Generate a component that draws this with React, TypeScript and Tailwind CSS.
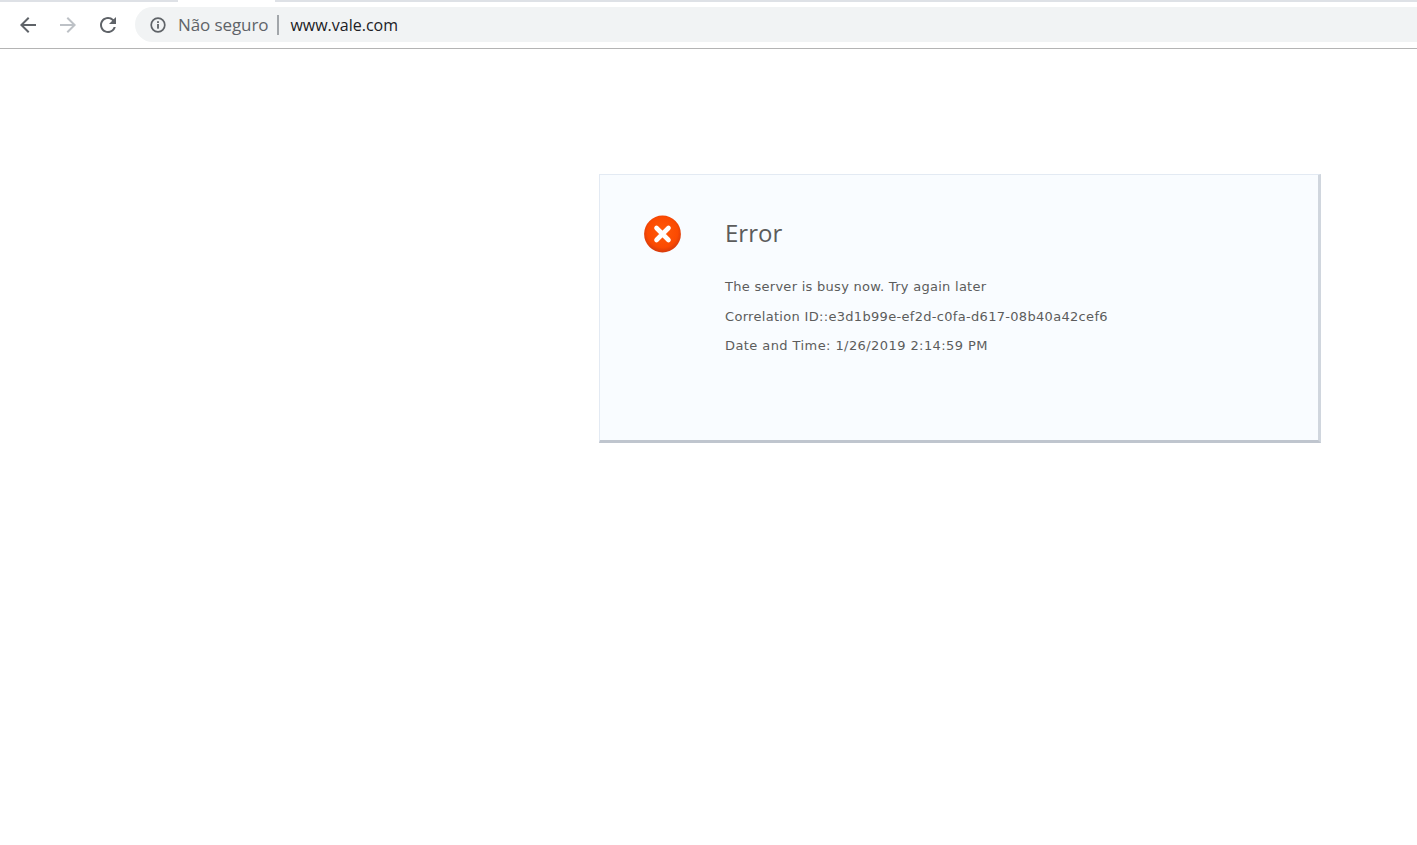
function NavIcon({ d, className }: { d: string; className: string }) {
  return (
    <svg width="24" height="24" viewBox="0 0 24 24" className={className} fill="currentColor">
      <path d={d} />
    </svg>
  );
}

function InfoIcon() {
  return (
    <svg width="16" height="16" viewBox="0 0 16 16" fill="none">
      <circle cx="8" cy="8" r="6.8" stroke="#5f6368" strokeWidth="1.7" />
      <rect x="7.1" y="7" width="1.8" height="4.7" fill="#5f6368" />
      <rect x="7.1" y="4.2" width="1.8" height="1.8" fill="#5f6368" />
    </svg>
  );
}

function ErrorIcon() {
  return (
    <svg width="38" height="38" viewBox="0 0 38 38">
      <defs>
        <radialGradient id="err" cx="50%" cy="45%" r="55%">
          <stop offset="0%" stopColor="#ff5a0a" />
          <stop offset="75%" stopColor="#fb4a02" />
          <stop offset="100%" stopColor="#d63a0c" />
        </radialGradient>
      </defs>
      <circle cx="18.5" cy="19" r="18.4" fill="url(#err)" />
      <path d="M12.5 13 L24.5 25 M24.5 13 L12.5 25" stroke="#fff" strokeWidth="4.6" strokeLinecap="round" />
    </svg>
  );
}

function Toolbar() {
  return (
    <div>
      <div className="flex h-[2px] bg-[#dee1e6]">
        <div className="ml-[178px] w-[97px] bg-white" />
      </div>
      <div className="flex h-[47px] items-center border-b border-[#b4b4b4] bg-white pb-[1px]">
        <div className="ml-[16px] flex items-center gap-[16px]">
          <NavIcon className="text-[#5f6368]" d="M20 11H7.83l5.59-5.59L12 4l-8 8 8 8 1.41-1.41L7.83 13H20v-2z" />
          <NavIcon className="text-[#bdc1c6]" d="M4 11h12.17l-5.59-5.59L12 4l8 8-8 8-1.41-1.41L16.17 13H4v-2z" />
          <NavIcon className="text-[#5f6368]" d="M17.65 6.35A7.958 7.958 0 0012 4c-4.42 0-7.99 3.58-7.99 8s3.57 8 7.99 8c3.73 0 6.84-2.55 7.73-6h-2.08A5.99 5.99 0 0112 18c-3.31 0-6-2.69-6-6s2.69-6 6-6c1.66 0 3.14.69 4.22 1.78L13 11h7V4l-2.35 2.35z" />
        </div>
        <div className="ml-[15px] flex h-[35px] flex-1 items-center rounded-l-full bg-[#f1f3f4] pl-[15px] font-['Open_Sans',sans-serif]">
          <InfoIcon />
          <span className="ml-[12px] text-[17px] tracking-[-0.1px] text-[#5f6368]">Não seguro</span>
          <span className="ml-[9px] h-[20px] w-[2px] bg-[#a2a6aa]" />
          <span className="ml-[11px] text-[16px] text-[#202124]">www.vale.com</span>
        </div>
      </div>
    </div>
  );
}

export default function App() {
  return (
    <div className="min-h-[845px] bg-white">
      <Toolbar />
      <div className="flex pl-[599px] pt-[125px]">
        <div className="flex h-[269px] w-[722px] border border-r-[3px] border-b-[3px] border-[#e3eaf3] border-r-[#d0d6de] border-b-[#bfc5ce] bg-[#f9fcff] pl-[44px] pt-[40px]">
          <ErrorIcon />
          <div className="ml-[43px] text-[#5c5c5c]">
            <h1 className="font-['Open_Sans',sans-serif] text-[24px] leading-[36px]">Error</h1>
            <div className="mt-[27px] font-['DejaVu_Sans',sans-serif] text-[13px] leading-[18px] tracking-[0.31px]">
              <p className="tracking-[0.28px]">The server is busy now. Try again later</p>
              <p className="mt-[12px]">Correlation ID::e3d1b99e-ef2d-c0fa-d617-08b40a42cef6</p>
              <p className="mt-[11px] tracking-[0.42px]">Date and Time: 1/26/2019 2:14:59 PM</p>
            </div>
          </div>
        </div>
      </div>
    </div>
  );
}
